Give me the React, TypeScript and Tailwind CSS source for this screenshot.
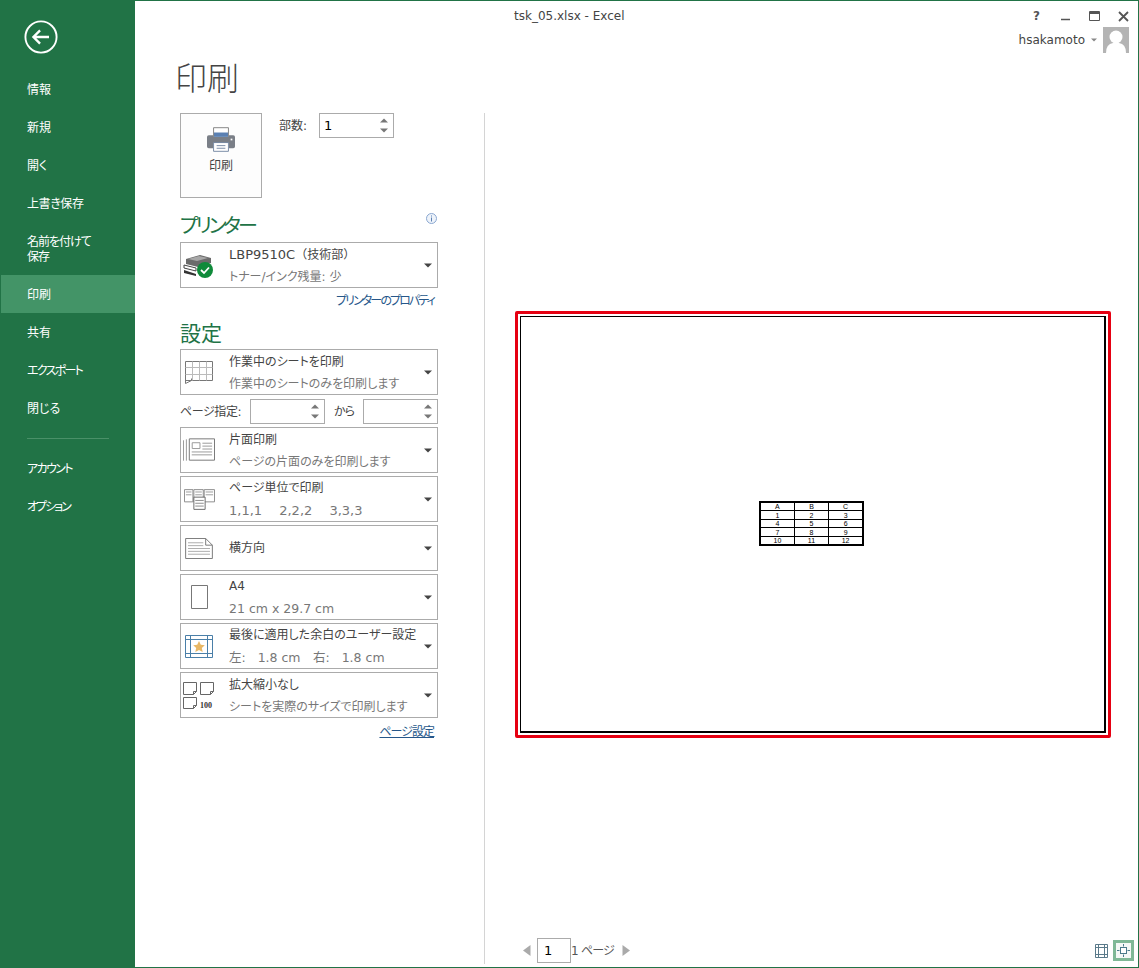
import { ReactNode } from "react";

const jp = "font-['DejaVu_Sans','Noto_Sans_CJK_JP',sans-serif] [font-feature-settings:'palt']";

function Caret() {
  return (
    <svg width="8" height="5" viewBox="0 0 8 5" className="shrink-0">
      <path d="M0 0.5h8L4 4.5z" fill="#444" />
    </svg>
  );
}

function SpinArrows() {
  return (
    <div className="flex flex-col gap-[5px] pr-[5px]">
      <svg width="8" height="5" viewBox="0 0 8 5">
        <path d="M0 4.500h8L4 0.500z" fill="#777" />
      </svg>
      <svg width="8" height="5" viewBox="0 0 8 5">
        <path d="M0 0.500h8L4 4.500z" fill="#777" />
      </svg>
    </div>
  );
}

function Option({ icon, title, sub }: { icon: ReactNode; title: ReactNode; sub?: ReactNode }) {
  return (
    <div className="flex h-[46px] w-[258px] items-center border border-[#ababab] bg-white">
      <div className="flex w-[48px] shrink-0 items-center justify-center pr-[12px]">{icon}</div>
      <div className={sub ? "flex min-w-0 flex-1 flex-col gap-[5px] pt-[2px] leading-[17px]" : "flex min-w-0 flex-1 flex-col leading-[17px]"}>
        <div className="whitespace-pre text-[12px] text-[#444]">{title}</div>
        {sub && <div className="whitespace-pre text-[12px] text-[#777]">{sub}</div>}
      </div>
      <div className="pr-[5px]">
        <Caret />
      </div>
    </div>
  );
}

function Num({ children }: { children: ReactNode }) {
  return <span className="text-[12.500px]">{children}</span>;
}

const stroke = { fill: "none", stroke: "#777", strokeWidth: 1 };

const iconPrinter = (
  <svg width="28" height="25" viewBox="0 0 32 28">
    <path d="M7.500 0.500h17v11h-17z" fill="#fff" stroke="#777" />
    <path d="M8 6h16v5H8z" fill="#5b80b2" />
    <path d="M2 9h5v2h18V9h5q2 0 2 2v11q0 2-2 2h-5v-6H7v6H2q-2 0-2-2V11q0-2 2-2z" fill="#7a7f87" />
    <path d="M7.500 17.500h17v10h-17z" fill="#fff" stroke="#6a7f9c" />
    <path d="M11 21h10M11 24h10" stroke="#6a7f9c" />
    <path d="M27 13h2v2h-2z" fill="#fff" />
  </svg>
);

const iconStatus = (
  <svg width="32" height="30" viewBox="0 0 32 30">
    <path d="M3 9l14-4 11 3v5l-13 4-12-3z" fill="#6b6b6b" />
    <path d="M5 9l11-3 9 2-11 3z" fill="#a7a7a7" />
    <path d="M1 15l12 3v3L1 18z" fill="#fff" stroke="#444" />
    <path d="M1 20l12 4v2L1 23z" fill="#333" />
    <circle cx="22" cy="20" r="8" fill="#0f8a3a" />
    <path d="M18 20l3 3 5-5.500" fill="none" stroke="#fff" strokeWidth="1.800" />
  </svg>
);

const iconSheet = (
  <svg width="28" height="25" viewBox="0 0 28 25">
    <path d="M0.500 1.500h27v19h-21l-6 3z" {...stroke} />
    <path d="M0.500 7.500h27M0.500 14.500h27M7.500 1.500v19M14.500 1.500v19M21.500 1.500v19" fill="none" stroke="#bbb" />
    <path d="M0.500 20.500h6v-2" {...stroke} />
  </svg>
);

const iconSimplex = (
  <svg width="32" height="26" viewBox="0 0 33 26">
    <path d="M0.500 3v21M3.500 2v22" fill="none" stroke="#999" />
    <path d="M6.500 1.500h26v22h-26z" {...stroke} />
    <path d="M9.500 5.500h8v6h-8z" fill="none" stroke="#999" />
    <path d="M20 6h10M20 9h10M20 12h10M9 15h21M9 18h21" fill="none" stroke="#999" />
  </svg>
);

const iconCollate = (
  <svg width="31" height="23" viewBox="0 0 33 24">
    <path d="M0.500 1.500h9v13h-9zM21.500 1.500h11v13h-11z" fill="#fff" stroke="#888" />
    <path d="M10.500 1.500h10v13h-10z" fill="#fff" stroke="#888" />
    <path d="M2 4h6M2 7h6M12 4h7M12 7h7M23 4h8M23 7h8" fill="none" stroke="#999" />
    <path d="M10.500 9.500h12v13h-12z" fill="#fff" stroke="#666" />
    <path d="M12 13h9M12 16h9M12 19h9" fill="none" stroke="#888" />
  </svg>
);

const iconLandscape = (
  <svg width="28" height="21" viewBox="0 0 29 22">
    <path d="M0.500 0.500h21l7 7v14h-28z" {...stroke} />
    <path d="M21.500 0.500v7h7" {...stroke} />
    <path d="M3 5h16M3 8h16M3 11h23M3 14h23M3 17h23" fill="none" stroke="#aaa" />
  </svg>
);

const iconA4 = (
  <svg width="17" height="24" viewBox="0 0 17 24">
    <path d="M0.500 0.500h16v23h-16z" {...stroke} />
  </svg>
);

const iconMargin = (
  <svg width="28" height="23" viewBox="0 0 28 23">
    <path d="M0.500 0.500h27v22h-27z" fill="#fff" stroke="#4a7fa8" />
    <path d="M0.500 4.500h27M0.500 18.500h27M5.500 0.500v22M22.500 0.500v22" fill="none" stroke="#4a7fa8" />
    <path d="M14 6l1.800 3.800 4 0.400-3 2.800 0.900 4.100-3.700-2.200-3.700 2.200 0.900-4.100-3-2.800 4-0.400z" fill="#e8b765" />
  </svg>
);

const iconScale = (
  <svg width="32" height="27" viewBox="0 0 32 27">
    <g fill="none" stroke="#666">
      <path d="M0.500 0.500h13v9l-3 3h-10z" />
      <path d="M10.500 12.500v-3h3" />
      <path d="M17.500 0.500h13v9l-3 3h-10z" />
      <path d="M27.500 12.500v-3h3" />
      <path d="M0.500 15.500h13v8l-3 3h-10z" />
      <path d="M10.500 26.500v-3h3" />
    </g>
    <text x="17" y="25.500" fontFamily="Liberation Serif, serif" fontSize="8" fontWeight="700" fill="#333">
      100
    </text>
  </svg>
);

function MenuItem({ label, className = "" }: { label: string; className?: string }) {
  return <div className={"flex h-[38px] items-center pl-[27px] pt-[2px] text-[12px] text-white " + className}>{label}</div>;
}

const rows = [
  ["A", "B", "C"],
  ["1", "2", "3"],
  ["4", "5", "6"],
  ["7", "8", "9"],
  ["10", "11", "12"],
];

export default function App() {
  return (
    <div className={"flex h-[968px] w-[1139px] overflow-hidden border border-l-0 border-[#217346] bg-white " + jp}>
      {/* backstage menu */}
      <aside className="w-[135px] shrink-0 bg-[#217346]">
        <div className="flex h-[69px] items-start pl-[24px] pt-[19px]">
          <svg width="34" height="34" viewBox="0 0 36 36">
            <circle cx="18" cy="18" r="16.500" fill="none" stroke="#fff" strokeWidth="2" />
            <path d="M26.500 18H10M17 11l-7 7 7 7" fill="none" stroke="#fff" strokeWidth="2.500" />
          </svg>
        </div>
        <MenuItem label="情報" />
        <MenuItem label="新規" />
        <MenuItem label="開く" />
        <MenuItem label="上書き保存" className="tracking-[-0.400px]" />
        <div className="flex h-[53px] items-center pl-[27px] pt-[2px] text-[12px] leading-[15px] tracking-[-1px] text-white">
          名前を付けて
          <br />
          保存
        </div>
        <div className="ml-[1px] flex h-[38px] items-center bg-[#439467] pl-[26px] pt-[2px] text-[12px] text-white">印刷</div>
        <MenuItem label="共有" />
        <MenuItem label="エクスポート" className="tracking-[-1.700px]" />
        <MenuItem label="閉じる" />
        <div className="mb-[10px] ml-[27px] mt-[11px] h-px w-[82px] bg-[#4a9068]" />
        <MenuItem label="アカウント" className="tracking-[-1.600px]" />
        <MenuItem label="オプション" className="tracking-[-2px]" />
      </aside>

      <main className="flex min-w-0 flex-1 flex-col">
        {/* title bar */}
        <div className="flex h-[53px] shrink-0">
          <div className="ml-[379px] pt-[7px] text-[12px] leading-[16px] text-[#444]">tsk_05.xlsx - Excel</div>
          <div className="ml-auto flex flex-col items-end pr-[9px] pt-[7px]">
            <div className="flex items-center gap-[18px]">
              <span className="mr-[2px] text-[12px] font-bold leading-[16px] text-[#555]">?</span>
              <svg width="11" height="11" viewBox="0 0 11 11">
                <path d="M1 8.500h9" stroke="#555" strokeWidth="1.500" />
              </svg>
              <svg width="11" height="11" viewBox="0 0 11 11">
                <path d="M0.500 0.500h10v9h-10z" fill="none" stroke="#555" />
                <path d="M0.500 2h10" stroke="#555" strokeWidth="2" />
              </svg>
              <svg width="11" height="11" viewBox="0 0 11 11">
                <path d="M1 1l9 9M10 1l-9 9" stroke="#555" strokeWidth="1.800" />
              </svg>
            </div>
            <div className="mt-[3px] flex items-center">
              <span className="text-[12px] text-[#444]">hsakamoto</span>
              <svg width="6" height="4" viewBox="0 0 6 4" className="ml-[6px] mr-[6px]">
                <path d="M0 0.500h6L3 3.500z" fill="#888" />
              </svg>
              <svg width="26" height="26" viewBox="0 0 26 26">
                <rect width="26" height="26" fill="#b4b4b4" />
                <circle cx="13" cy="10" r="6.500" fill="#fff" />
                <path d="M3 26q0-9 7-10h6q7 1 7 10z" fill="#fff" />
              </svg>
            </div>
          </div>
        </div>

        <div className="flex min-h-0 flex-1">
          <div className="w-[349px] shrink-0">
            <h1 className="h-[59px] pl-[40px] pt-[5px] text-[32px] font-light leading-[40px] text-[#444]">印刷</h1>

            <div className="ml-[45px] w-[258px]">
              <div className="flex h-[85px]">
                <div className="flex h-[85px] w-[82px] flex-col items-center border border-[#ababab] bg-[#fdfdfd] pt-[13px]">
                  {iconPrinter}
                  <span className="mt-[5px] text-[12px] text-[#444]">印刷</span>
                </div>
                <span className="ml-[17px] pt-[4px] text-[12px] text-[#444]">部数:</span>
                <div className="ml-[12px] flex h-[25px] w-[75px] items-center justify-between border border-[#ababab]">
                  <span className="pl-[4px] text-[13px] text-black">1</span>
                  <SpinArrows />
                </div>
              </div>

              <div className="flex h-[44px] items-end justify-between pb-[1px]">
                <h2 className="text-[20px] leading-[30px] tracking-[-3px] text-[#217346]">プリンター</h2>
                <svg width="11" height="11" viewBox="0 0 11 11" className="mb-[17px] mr-[1px]">
                  <circle cx="5.500" cy="5.500" r="5" fill="#eef3fa" stroke="#8aa7d0" />
                  <path d="M5.500 2.500v1M5.500 4.500v4" stroke="#5b80b2" />
                </svg>
              </div>
              <Option
                icon={iconStatus}
                title={
                  <>
                    <span className="text-[13px]">LBP9510C</span>
                    <span className="[font-feature-settings:normal]">{"\uFF08技術部\uFF09"}</span>
                  </>
                }
                sub="トナー/インク残量: 少"
              />
              <div className="flex h-[24px] items-center justify-end pr-[4px] pt-[2px] text-[12px] tracking-[-1.900px] text-[#26578a]">
                プリンターのプロパティ
              </div>

              <div className="flex h-[37px] items-end">
                <h2 className="text-[21px] leading-[30px] text-[#217346]">設定</h2>
              </div>

              <div className="flex flex-col gap-[3px]">
                <Option icon={iconSheet} title="作業中のシートを印刷" sub="作業中のシートのみを印刷します" />
                <div className="mt-[1px] flex h-[25px] items-center">
                  <span className="w-[70px] whitespace-nowrap text-[12px] tracking-[-0.400px] text-[#444]">ページ指定:</span>
                  <div className="flex h-[25px] w-[75px] items-center justify-end border border-[#ababab]">
                    <SpinArrows />
                  </div>
                  <span className="w-[38px] pl-[9px] text-[12px] tracking-[-1px] text-[#444]">から</span>
                  <div className="flex h-[25px] w-[75px] items-center justify-end border border-[#ababab]">
                    <SpinArrows />
                  </div>
                </div>
                <Option icon={iconSimplex} title="片面印刷" sub="ページの片面のみを印刷します" />
                <Option
                  icon={iconCollate}
                  title="ページ単位で印刷"
                  sub={<span className="text-[13px]">{"1,1,1 \u30002,2,2 \u30003,3,3"}</span>}
                />
                <Option icon={iconLandscape} title="横方向" />
                <Option icon={iconA4} title="A4" sub={<Num>21 cm x 29.7 cm</Num>} />
                <Option
                  icon={iconMargin}
                  title="最後に適用した余白のユーザー設定"
                  sub={<Num>{"左:   1.8 cm\u3000右:   1.8 cm"}</Num>}
                />
                <Option icon={iconScale} title="拡大縮小なし" sub="シートを実際のサイズで印刷します" />
              </div>
              <div className="flex h-[26px] items-center justify-end pr-[4px] pt-[2px] text-[12px] tracking-[-1px] text-[#26578a] underline">
                ページ設定
              </div>
            </div>
          </div>

          {/* preview */}
          <div className="mb-[3px] mt-[59px] flex min-w-0 flex-1 flex-col border-l border-[#d4d4d4]">
            <div className="flex flex-1 items-center pl-[30px]">
              <div className="h-[427px] w-[596px] rounded-[2px] border-[3px] border-[#e60012] p-[2px]">
                <div className="flex h-full w-full items-center justify-center border border-b-[2px] border-r-[2px] border-black pb-[1px] pr-[2px]">
                  <table className="w-[105px] table-fixed border-collapse border-2 border-black text-center font-['Liberation_Sans',sans-serif] text-[7px] leading-[7px] text-black">
                    <tbody>
                      {rows.map((r) => (
                        <tr key={r[0]} className="h-[8.500px]">
                          {r.map((c) => (
                            <td key={c} className="border border-black p-0">
                              {c}
                            </td>
                          ))}
                        </tr>
                      ))}
                    </tbody>
                  </table>
                </div>
              </div>
            </div>
            <div className="flex h-[28px] shrink-0 items-start pl-[38px]">
              <div className="mt-[2px] flex h-[25px] items-center">
                <svg width="8" height="11" viewBox="0 0 8 11" className="mr-[6px]">
                  <path d="M7.500 0v11L0 5.500z" fill="#aaa" />
                </svg>
                <div className="flex h-[25px] w-[34px] items-center border border-[#ababab] pl-[6px] text-[13px] text-black">1</div>
                <span className="w-[50px] whitespace-nowrap text-[12px] tracking-[-0.800px] text-[#555]">1 ページ</span>
                <svg width="8" height="11" viewBox="0 0 8 11" className="ml-[1px]">
                  <path d="M0.500 0v11L8 5.500z" fill="#aaa" />
                </svg>
              </div>
              <div className="ml-auto mr-[4px] mt-[4px] flex items-center gap-[5px]">
                <svg width="13" height="14" viewBox="0 0 13 14">
                  <path d="M0.500 0.500h12v13h-12zM0.500 3.500h12M0.500 10.500h12M3.500 0.500v13M9.500 0.500v13" fill="none" stroke="#5a7a8a" />
                </svg>
                <svg width="21" height="21" viewBox="0 0 21 21">
                  <rect width="21" height="21" fill="#7fb896" />
                  <rect x="3" y="3" width="15" height="15" fill="#f4f8f6" />
                  <rect x="7.500" y="7.500" width="6" height="6" fill="#fff" stroke="#4a7a8a" />
                  <path d="M10.500 4v2.500M10.500 14.500V17M4 10.500h2.500M14.500 10.500H17" stroke="#4a7a8a" />
                </svg>
              </div>
            </div>
          </div>
        </div>
      </main>
    </div>
  );
}
